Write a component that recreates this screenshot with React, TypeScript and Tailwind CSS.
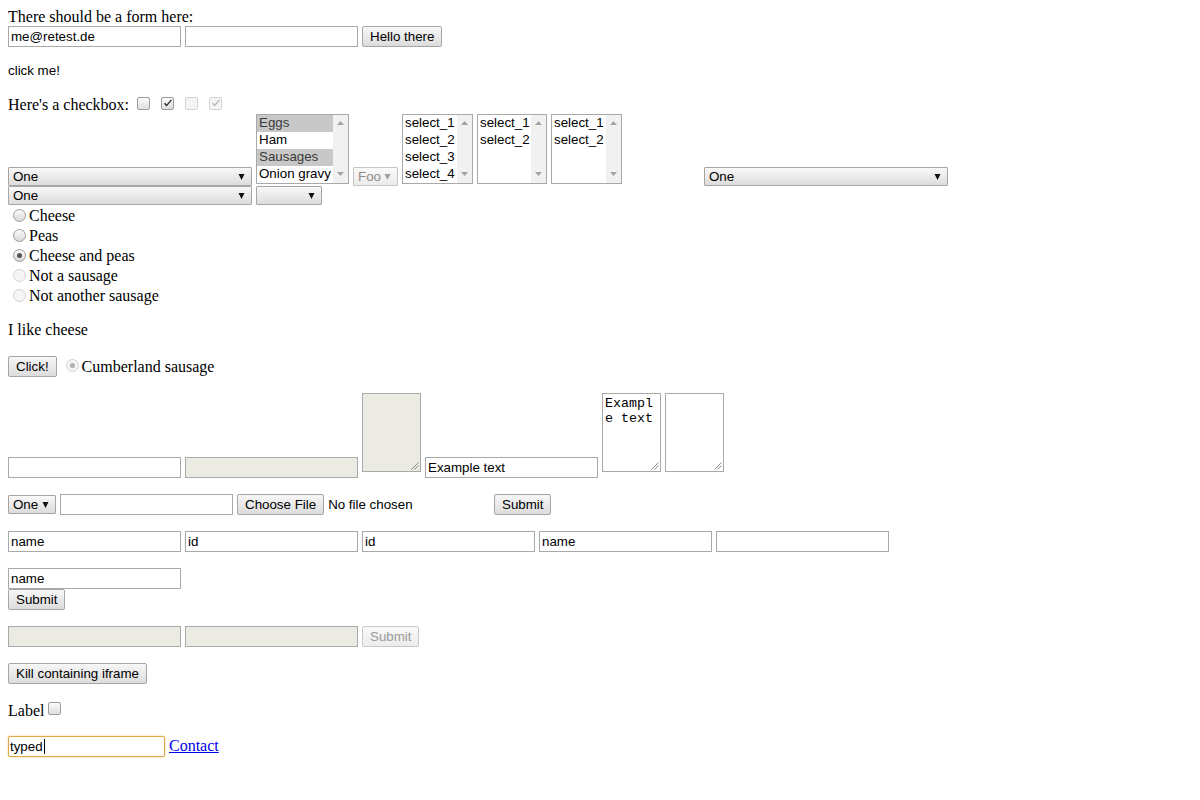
import React from "react";

type Cls = { cls?: string };

function Input({ cls = "w-[173px]", value = "", disabled = false }: Cls & { value?: string; disabled?: boolean }) {
  return (
    <div
      className={`h-[21px] ${cls} shrink-0 border border-[#a9a9a9] ${disabled ? "bg-[#ebebe4]" : "bg-white"} pl-[2px] leading-[19px] whitespace-nowrap overflow-hidden font-['Liberation_Sans',Arial,sans-serif] text-[13.33px] text-black`}
    >
      {value}
    </div>
  );
}

function Btn({ children, disabled = false }: { children: React.ReactNode; disabled?: boolean }) {
  return (
    <div
      className={`h-[21px] shrink-0 px-[7px] border rounded-[2px] leading-[19px] whitespace-nowrap font-['Liberation_Sans',Arial,sans-serif] text-[13.33px] ${disabled ? "border-[#c9c9c9] text-[#9a9a9a] bg-linear-to-b from-[#f9f9f9] to-[#ececec]" : "border-[#a6a6a6] text-black bg-linear-to-b from-[#f7f7f7] to-[#dcdcdc]"}`}
    >
      {children}
    </div>
  );
}

function Arrow({ color = "#111" }: { color?: string }) {
  return (
    <svg width="7" height="6" viewBox="0 0 7 6" className="shrink-0">
      <polygon points="0.5,0 6.5,0 3.5,6" fill={color} />
    </svg>
  );
}

function Select({ cls = "w-[244px]", value = "", disabled = false }: Cls & { value?: string; disabled?: boolean }) {
  return (
    <div
      className={`h-[19px] ${cls} shrink-0 flex items-center justify-between pl-[4px] pr-[6px] border rounded-[1px] whitespace-nowrap font-['Liberation_Sans',Arial,sans-serif] text-[13.33px] leading-[17px] ${disabled ? "border-[#c5c5c5] text-[#8c8c8c] bg-linear-to-b from-[#fafafa] to-[#ebebeb]" : "border-[#a6a6a6] text-black bg-linear-to-b from-[#f9f9f9] to-[#dcdcdc]"}`}
    >
      <span>{value}</span>
      <Arrow color={disabled ? "#a0a0a0" : "#111"} />
    </div>
  );
}

function ListBox({ cls, options, selected = [] }: { cls: string; options: string[]; selected?: number[] }) {
  return (
    <div className={`h-[70px] ${cls} shrink-0 flex border border-[#a9a9a9] bg-white font-['Liberation_Sans',Arial,sans-serif] text-[13.33px]`}>
      <div className="flex-1 min-w-0 flex flex-col">
        {options.map((o, i) => (
          <div
            key={i}
            className={`h-[17px] leading-[16px] pl-[2px] whitespace-nowrap overflow-hidden ${selected.includes(i) ? "bg-[#c8c8c8] text-[#3a3a3a]" : "text-black"}`}
          >
            {o}
          </div>
        ))}
      </div>
      <div className="w-[15px] shrink-0 bg-[#f1f1f1] flex flex-col items-center justify-between pt-[6px] pb-[7px]">
        <svg width="7" height="4" viewBox="0 0 7 4">
          <polygon points="0,4 7,4 3.5,0" fill="#a3a3a3" />
        </svg>
        <svg width="7" height="4" viewBox="0 0 7 4">
          <polygon points="0,0 7,0 3.5,4" fill="#a3a3a3" />
        </svg>
      </div>
    </div>
  );
}

function Grip() {
  return (
    <svg className="absolute right-[1px] bottom-[1px]" width="8" height="8" viewBox="0 0 8 8">
      <line x1="7.5" y1="0.5" x2="0.5" y2="7.5" stroke="#8a8a8a" strokeWidth="1" />
      <line x1="7.5" y1="3.5" x2="3.5" y2="7.5" stroke="#8a8a8a" strokeWidth="1" />
    </svg>
  );
}

function TextArea({ disabled = false, text = "" }: { disabled?: boolean; text?: string }) {
  return (
    <div
      className={`relative h-[79px] w-[59px] shrink-0 mb-[6px] border border-[#a9a9a9] ${disabled ? "bg-[#ebebe4]" : "bg-white"} p-[2px] font-['Liberation_Mono','DejaVu_Sans_Mono',monospace] text-[13.33px] leading-[15px] break-all text-black`}
    >
      {text}
      <Grip />
    </div>
  );
}

function Checkbox({ checked = false, disabled = false, cls = "" }: { checked?: boolean; disabled?: boolean; cls?: string }) {
  return (
    <div
      className={`relative w-[13px] h-[13px] shrink-0 rounded-[2px] border ${cls} ${disabled ? "border-[#d4d4d4] bg-[#f5f5f5]" : "border-[#9c9c9c] bg-linear-to-b from-[#fbfbfb] to-[#dedede]"}`}
    >
      {checked && (
        <svg className="absolute left-[1px] top-[1px]" width="10" height="9" viewBox="0 0 10 9">
          <path d="M1 4.8 L3.6 7.6 L9 1.2 L8 0.6 L3.6 5.6 L2.1 3.8 Z" fill={disabled ? "#b5b5b5" : "#2a2a2a"} />
        </svg>
      )}
    </div>
  );
}

function Radio({ checked = false, disabled = false, cls = "" }: { checked?: boolean; disabled?: boolean; cls?: string }) {
  return (
    <div
      className={`w-[13px] h-[13px] shrink-0 rounded-full border flex items-center justify-center ${cls} ${disabled ? "border-[#d2d2d2] bg-[#f5f5f5]" : "border-[#9c9c9c] bg-linear-to-b from-[#fbfbfb] to-[#d8d8d8]"}`}
    >
      {checked && <div className={`w-[5px] h-[5px] rounded-full ${disabled ? "bg-[#b0b0b0]" : "bg-[#555555]"}`} />}
    </div>
  );
}

export default function App() {
  return (
    <div className="min-h-[800px] w-[1200px] bg-white p-[8px] text-black font-['Liberation_Serif','Times_New_Roman',serif] text-[16px]">
      {/* heading */}
      <div className="h-[18px] leading-[18px] whitespace-nowrap">There should be a form here:</div>

      {/* first form */}
      <div className="flex gap-[4px] h-[21px]">
        <Input value="me@retest.de" />
        <Input />
        <Btn>Hello there</Btn>
      </div>

      {/* image alt text */}
      <div className="mt-[16px] h-[18px] leading-[15px] font-['Liberation_Sans',Arial,sans-serif] text-[13.33px]">click me!</div>

      {/* checkboxes */}
      <div className="mt-[14px] h-[19px] flex items-center">
        <span className="leading-[18px] whitespace-nowrap">Here&apos;s a checkbox:</span>
        <Checkbox cls="ml-[8px] -mt-[2px]" />
        <Checkbox cls="ml-[11px] -mt-[2px]" checked />
        <Checkbox cls="ml-[11px] -mt-[2px]" disabled />
        <Checkbox cls="ml-[11px] -mt-[2px]" disabled checked />
      </div>

      {/* select line 1 */}
      <div className="h-[72px] flex items-end gap-[4px]">
        <Select value="One" />
        <div className="mb-[2px]">
          <ListBox cls="w-[93px]" options={["Eggs", "Ham", "Sausages", "Onion gravy"]} selected={[0, 2]} />
        </div>
        <Select cls="w-[45px]" value="Foo" disabled />
        <div className="mb-[2px] flex gap-[4px]">
          <ListBox cls="w-[71px]" options={["select_1", "select_2", "select_3", "select_4"]} />
          <ListBox cls="w-[70px]" options={["select_1", "select_2"]} />
          <ListBox cls="w-[71px]" options={["select_1", "select_2"]} />
        </div>
        <div className="w-[74px] shrink-0" />
        <Select value="One" />
      </div>

      {/* select line 2 */}
      <div className="h-[19px] flex gap-[4px]">
        <Select value="One" />
        <Select cls="w-[66px]" value="" />
      </div>

      {/* radios */}
      <div className="mt-[1px] flex flex-col">
        {[
          { t: "Cheese" },
          { t: "Peas" },
          { t: "Cheese and peas", c: true },
          { t: "Not a sausage", d: true },
          { t: "Not another sausage", d: true },
        ].map((r, i) => (
          <div key={i} className="h-[20px] flex items-center leading-[20px] whitespace-nowrap">
            <Radio cls="ml-[5px] mr-[3px] -mt-[2px]" checked={r.c} disabled={r.d} />
            <span>{r.t}</span>
          </div>
        ))}
      </div>

      {/* I like cheese */}
      <div className="mt-[15px] h-[18px] leading-[18px]">I like cheese</div>

      {/* click + cumberland */}
      <div className="mt-[17px] h-[21px] flex items-center">
        <Btn>Click!</Btn>
        <Radio cls="ml-[9px] mr-[3px] -mt-[2px]" checked disabled />
        <span className="leading-[20px] whitespace-nowrap">Cumberland sausage</span>
      </div>

      {/* textarea row */}
      <div className="mt-[16px] h-[85px] flex items-end gap-[4px]">
        <Input />
        <Input disabled />
        <TextArea disabled />
        <Input value="Example text" />
        <TextArea text="Example text" />
        <TextArea />
      </div>

      {/* file row */}
      <div className="mt-[16px] h-[21px] flex items-center gap-[4px]">
        <Select cls="w-[48px]" value="One" />
        <Input />
        <div className="w-[253px] shrink-0 flex items-center gap-[4px]">
          <Btn>Choose File</Btn>
          <span className="font-['Liberation_Sans',Arial,sans-serif] text-[13.33px] whitespace-nowrap">No file chosen</span>
        </div>
        <Btn>Submit</Btn>
      </div>

      {/* names row */}
      <div className="mt-[16px] h-[21px] flex gap-[4px]">
        <Input value="name" />
        <Input value="id" />
        <Input value="id" />
        <Input value="name" />
        <Input />
      </div>

      {/* name + submit */}
      <div className="mt-[16px] flex flex-col items-start">
        <Input value="name" />
        <Btn>Submit</Btn>
      </div>

      {/* disabled row */}
      <div className="mt-[16px] h-[21px] flex gap-[4px]">
        <Input disabled />
        <Input disabled />
        <Btn disabled>Submit</Btn>
      </div>

      {/* kill */}
      <div className="mt-[16px] h-[21px] flex">
        <Btn>Kill containing iframe</Btn>
      </div>

      {/* label */}
      <div className="mt-[16px] h-[20px] flex items-center">
        <span className="leading-[20px] mt-[1px]">Label</span>
        <Checkbox cls="ml-[4px] -mt-[3px]" />
      </div>

      {/* typed */}
      <div className="mt-[16px] h-[21px] flex items-center gap-[4px]">
        <div className="h-[21px] w-[157px] shrink-0 flex items-center border border-[#e1a84b] rounded-[2px] shadow-[0_0_2px_#f0c070] bg-white pl-[1px] font-['Liberation_Sans',Arial,sans-serif] text-[13.33px] leading-[19px]">
          <span>typed</span>
          <span className="w-[1px] h-[15px] bg-black ml-[1px]" />
        </div>
        <span className="text-[#0000ee] underline leading-[20px] -mt-[1px]">Contact</span>
      </div>
    </div>
  );
}
